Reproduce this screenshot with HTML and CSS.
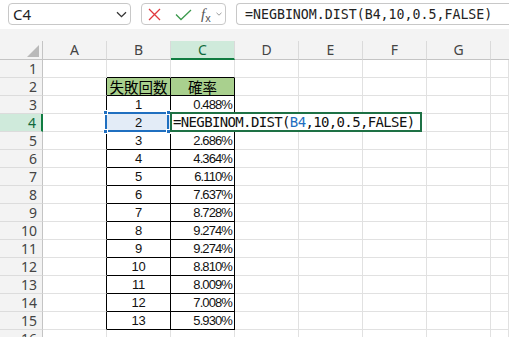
FILE: index.html
```html
<!DOCTYPE html>
<html lang="ja">
<head>
<meta charset="utf-8">
<link rel="stylesheet" href="styles.css">
</head>
<body>
<div class="app">
  <div class="topbar">
    <div class="namebox">
      <span class="ref">C4</span>
      <svg class="chev" width="11" height="7" viewBox="0 0 11 7"><path d="M1 1.2 L5.5 5.6 L10 1.2" fill="none" stroke="#333" stroke-width="1.3"/></svg>
    </div>
    <div class="btns">
      <svg class="ico-x" width="13" height="13" viewBox="0 0 13 13"><path d="M1 1 L12 12 M12 1 L1 12" stroke="#e0393e" stroke-width="1.3" fill="none"/></svg>
      <svg class="ico-ok" width="17" height="12" viewBox="0 0 17 12"><path d="M1 5.5 L6 10.5 L16 1" stroke="#3c9a4e" stroke-width="1.3" fill="none"/></svg>
      <span class="fx">f<span class="fxs">x</span></span>
      <svg class="chev2" width="6" height="4" viewBox="0 0 6 4"><path d="M0.5 0.8 L3 3.2 L5.5 0.8" fill="none" stroke="#9a9a9a" stroke-width="1"/></svg>
    </div>
    <div class="fbox">=NEGBINOM.DIST(B4,10,0.5,FALSE)</div>
  </div>
  <div class="band"></div>
  <div class="sheet">
    <div class="corner"><span class="tri"></span></div>
    <div class="ch">A</div><div class="ch">B</div><div class="ch on">C</div><div class="ch">D</div><div class="ch">E</div><div class="ch">F</div><div class="ch">G</div><div class="ch last"></div>

    <div class="rh">1</div><div class="c"></div><div class="c kt"></div><div class="c kt"></div><div class="c"></div><div class="c"></div><div class="c"></div><div class="c"></div><div class="c"></div>

    <div class="rh">2</div><div class="c kl"></div><div class="c kb hd jp">失敗回数</div><div class="c kb hd jp">確率</div><div class="c"></div><div class="c"></div><div class="c"></div><div class="c"></div><div class="c"></div>

    <div class="rh">3</div><div class="c kl"></div><div class="c kb ctr">1</div><div class="c kb rt">0.488%</div><div class="c"></div><div class="c"></div><div class="c"></div><div class="c"></div><div class="c"></div>

    <div class="rh on">4</div><div class="c kl"></div>
    <div class="c kb ctr sel">2<span class="selbox"><i class="h h1"></i><i class="h h2"></i><i class="h h3"></i><i class="h h4"></i></span></div>
    <div class="c kb edit"><span class="editbox">=NEGBINOM.DIST(<span class="ref-b">B4</span>,10,0.5,FALSE)</span></div>
    <div class="c"></div><div class="c"></div><div class="c"></div><div class="c"></div><div class="c"></div>

    <div class="rh">5</div><div class="c kl"></div><div class="c kb ctr">3</div><div class="c kb rt">2.686%</div><div class="c"></div><div class="c"></div><div class="c"></div><div class="c"></div><div class="c"></div>

    <div class="rh">6</div><div class="c kl"></div><div class="c kb ctr">4</div><div class="c kb rt">4.364%</div><div class="c"></div><div class="c"></div><div class="c"></div><div class="c"></div><div class="c"></div>

    <div class="rh">7</div><div class="c kl"></div><div class="c kb ctr">5</div><div class="c kb rt">6.110%</div><div class="c"></div><div class="c"></div><div class="c"></div><div class="c"></div><div class="c"></div>

    <div class="rh">8</div><div class="c kl"></div><div class="c kb ctr">6</div><div class="c kb rt">7.637%</div><div class="c"></div><div class="c"></div><div class="c"></div><div class="c"></div><div class="c"></div>

    <div class="rh">9</div><div class="c kl"></div><div class="c kb ctr">7</div><div class="c kb rt">8.728%</div><div class="c"></div><div class="c"></div><div class="c"></div><div class="c"></div><div class="c"></div>

    <div class="rh">10</div><div class="c kl"></div><div class="c kb ctr">8</div><div class="c kb rt">9.274%</div><div class="c"></div><div class="c"></div><div class="c"></div><div class="c"></div><div class="c"></div>

    <div class="rh">11</div><div class="c kl"></div><div class="c kb ctr">9</div><div class="c kb rt">9.274%</div><div class="c"></div><div class="c"></div><div class="c"></div><div class="c"></div><div class="c"></div>

    <div class="rh">12</div><div class="c kl"></div><div class="c kb ctr">10</div><div class="c kb rt">8.810%</div><div class="c"></div><div class="c"></div><div class="c"></div><div class="c"></div><div class="c"></div>

    <div class="rh">13</div><div class="c kl"></div><div class="c kb ctr">11</div><div class="c kb rt">8.009%</div><div class="c"></div><div class="c"></div><div class="c"></div><div class="c"></div><div class="c"></div>

    <div class="rh">14</div><div class="c kl"></div><div class="c kb ctr">12</div><div class="c kb rt">7.008%</div><div class="c"></div><div class="c"></div><div class="c"></div><div class="c"></div><div class="c"></div>

    <div class="rh">15</div><div class="c kl"></div><div class="c kb ctr">13</div><div class="c kb rt">5.930%</div><div class="c"></div><div class="c"></div><div class="c"></div><div class="c"></div><div class="c"></div>

    <div class="rh">16</div><div class="c"></div><div class="c"></div><div class="c"></div><div class="c"></div><div class="c"></div><div class="c"></div><div class="c"></div><div class="c"></div>
  </div>
</div>
</body>
</html>
```

FILE: styles.css
```css
* { box-sizing: border-box; }
html, body { margin: 0; padding: 0; }
body {
  width: 509px;
  height: 337px;
  overflow: hidden;
  background: #ffffff;
  font-family: "Noto Sans", "Liberation Sans", sans-serif;
}
.app { width: 509px; }

.topbar {
  display: flex;
  height: 29px;
  padding: 3px 0 0 8px;
}
.namebox {
  width: 123px;
  height: 22px;
  border: 1px solid #c8c8c8;
  border-radius: 4px;
  display: flex;
  align-items: center;
  justify-content: space-between;
  padding: 0 3px 0 4px;
  font-size: 15px;
  color: #222;
}
.ref { line-height: 20px; }
.btns {
  width: 85px;
  height: 22px;
  margin-left: 10px;
  border: 1px solid #c8c8c8;
  border-radius: 4px;
  display: flex;
  align-items: center;
  padding-left: 6px;
}
.ico-ok { margin-left: 14px; margin-top: 1px; }
.fx {
  margin-left: 9px;
  font-family: "Liberation Serif", serif;
  font-style: italic;
  font-size: 15px;
  color: #555;
  line-height: 16px;
}
.fxs { font-size: 11px; font-style: normal; font-family: "Liberation Sans", sans-serif; position: relative; top: 3px; }
.chev2 { margin-left: 5px; }
.fbox {
  flex: 1;
  height: 22px;
  margin-left: 10px;
  border: 1px solid #c8c8c8;
  border-right: none;
  border-radius: 4px 0 0 4px;
  padding-left: 8px;
  display: flex;
  align-items: center;
  font-family: "DejaVu Sans Mono", "Liberation Mono", monospace;
  font-size: 13.25px;
  color: #222;
  white-space: nowrap;
}

.band { height: 12px; background: #f3f3f3; }

.sheet {
  display: grid;
  grid-template-columns: 43px repeat(7, 64px) 1fr;
  grid-template-rows: 19px repeat(16, 18px);
  background: #fff;
}
.corner {
  background: #f3f3f3;
  border-right: 1px solid #c4c4c4;
  border-bottom: 1px solid #c4c4c4;
  display: flex;
  justify-content: flex-end;
  align-items: flex-end;
  padding: 0 3px 2px 0;
}
.tri {
  width: 0;
  height: 0;
  border-left: 12px solid transparent;
  border-bottom: 12px solid #b9b9b9;
}
.ch {
  background: #f3f3f3;
  border-right: 1px solid #dadada;
  border-bottom: 1px solid #c4c4c4;
  text-align: center;
  font-size: 14px;
  line-height: 18px;
  color: #444;
}
.ch.last { border-right: none; }
.ch.on {
  background: #cfeadb;
  color: #0f6a3b;
  border-bottom: 2px solid #107c41;
  line-height: 17px;
}
.rh {
  background: #f3f3f3;
  border-right: 1px solid #c4c4c4;
  border-bottom: 1px solid #dcdcdc;
  text-align: right;
  padding-right: 5px;
  font-size: 14px;
  line-height: 17px;
  color: #444;
}
.rh.on {
  background: #cfeadb;
  color: #0f6a3b;
  border-right: 2px solid #107c41;
}
.c {
  border-right: 1px solid #e1e1e1;
  border-bottom: 1px solid #e1e1e1;
  font-family: "Liberation Sans", sans-serif;
  font-size: 13px;
  line-height: 17px;
  color: #111;
  white-space: nowrap;
}
.kt { border-bottom-color: #000; }
.kl { border-right-color: #000; }
.kb { border-right-color: #000; border-bottom-color: #000; }
.hd { background: #a9d08e; text-align: center; }
.jp { font-family: "Noto Sans CJK JP", sans-serif; font-size: 14.5px; line-height: 17px; color: #000; }
.ctr { text-align: center; letter-spacing: -0.2px; }
.rt { text-align: right; padding-right: 2px; letter-spacing: -0.9px; }

.sel { background: #e3ecf7; position: relative; }
.selbox {
  position: absolute;
  left: -2px;
  top: -2px;
  width: 64px;
  height: 20px;
  border: 2px solid #1f6fc0;
}
.h {
  position: absolute;
  width: 5px;
  height: 5px;
  background: #1f6fc0;
  border: 1px solid #fff;
}
.h1 { left: -4px; top: -4px; }
.h2 { right: -4px; top: -4px; }
.h3 { left: -4px; bottom: -4px; }
.h4 { right: -4px; bottom: -4px; }

.edit { position: relative; }
.editbox {
  position: absolute;
  left: -1px;
  top: -2px;
  height: 20px;
  border: 2px solid #1e7145;
  background: #fff;
  padding: 0 6px 0 1px;
  font-family: "DejaVu Sans Mono", "Liberation Mono", monospace;
  font-size: 14px;
  letter-spacing: -0.64px;
  line-height: 16px;
  color: #111;
  white-space: nowrap;
  z-index: 2;
}
.ref-b { color: #1f6fc0; }
```
